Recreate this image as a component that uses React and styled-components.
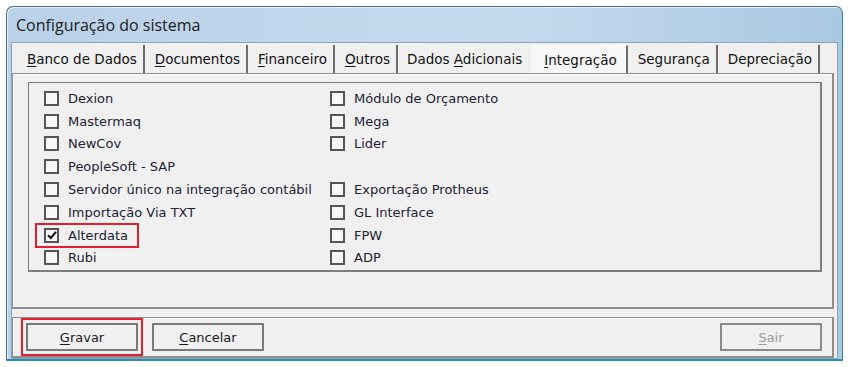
import React from "react";
import styled, { createGlobalStyle } from "styled-components";

const GlobalStyle = createGlobalStyle`
  html, body {
    overflow: hidden;
  }
  body {
    margin: 0;
    background: #ffffff;
    font-family: "DejaVu Sans", "Liberation Sans", sans-serif;
  }
`;

const tabs = [
  { label: "Banco de Dados", key: 0 },
  { label: "Documentos", key: 0 },
  { label: "Financeiro", key: 0 },
  { label: "Outros", key: 0 },
  { label: "Dados Adicionais", key: 6, beforeActive: true },
  { label: "Integração", key: 0, active: true },
  { label: "Segurança", key: -1 },
  { label: "Depreciação", key: -1 },
];

const leftColumn = [
  { label: "Dexion" },
  { label: "Mastermaq" },
  { label: "NewCov" },
  { label: "PeopleSoft - SAP" },
  { label: "Servidor único na integração contábil" },
  { label: "Importação Via TXT" },
  { label: "Alterdata", checked: true, marked: true },
  { label: "Rubi" },
];

const rightColumn = [
  { label: "Módulo de Orçamento" },
  { label: "Mega" },
  { label: "Lider" },
  null,
  { label: "Exportação Protheus" },
  { label: "GL Interface" },
  { label: "FPW" },
  { label: "ADP" },
];

// underlines the access key letter, like a Windows mnemonic
function Mnemonic({ text, at = 0 }) {
  if (at < 0) return <span>{text}</span>;
  return (
    <span>
      {text.slice(0, at)}
      <u>{text[at]}</u>
      {text.slice(at + 1)}
    </span>
  );
}

function Option({ item }) {
  if (!item) return <Empty />;
  const row = (
    <OptionRow>
      <Box>
        {item.checked && (
          <svg width="10" height="10" viewBox="0 0 10 10">
            <path d="M1 5.2 L3.8 8 L9 1.8" fill="none" stroke="#111" strokeWidth="2" />
          </svg>
        )}
      </Box>
      <OptionLabel>{item.label}</OptionLabel>
    </OptionRow>
  );
  return item.marked ? <RedMark>{row}</RedMark> : row;
}

export default function App() {
  const rows = leftColumn.map((l, i) => [l, rightColumn[i]]);
  return (
    <>
      <GlobalStyle />
      <Window>
        <TitleBar>Configuração do sistema</TitleBar>
        <Client>
          <TabStrip>
            {tabs.map((t) => (
              <Tab key={t.label} $active={t.active} $beforeActive={t.beforeActive}>
                <Mnemonic text={t.label} at={t.key} />
              </Tab>
            ))}
          </TabStrip>
          <TabPage>
            <GroupBox>
              <CheckGrid>
                {rows.map(([l, r], i) => (
                  <React.Fragment key={i}>
                    <Cell><Option item={l} /></Cell>
                    <Cell><Option item={r} /></Cell>
                  </React.Fragment>
                ))}
              </CheckGrid>
            </GroupBox>
          </TabPage>
          <ButtonBar>
            <ButtonMark>
              <Button><Mnemonic text="Gravar" /></Button>
            </ButtonMark>
            <Button><Mnemonic text="Cancelar" /></Button>
            <Spacer />
            <Button disabled $narrow><Mnemonic text="Sair" /></Button>
          </ButtonBar>
        </Client>
      </Window>
    </>
  );
}

const Window = styled.div`
  margin: 6px 0 0 6px;
  width: 837px;
  box-sizing: border-box;
  border: 1px solid #55697d;
  border-right-color: #2f87a6;
  border-bottom: 2px solid #2a8fae;
  border-radius: 7px 7px 0 0;
  background: linear-gradient(to right, #b9d1e9, #c6daee 60%, #a9c8e3);
  box-shadow: inset 1px 1px 0 #e6f0fa;
  padding: 0 4px;
  display: flex;
  flex-direction: column;
`;

const TitleBar = styled.div`
  height: 35px;
  display: flex;
  align-items: center;
  padding-left: 5px;
  font-family: "Open Sans", "Noto Sans", sans-serif;
  font-size: 16px;
  color: #1c1c1c;
`;

const Client = styled.div`
  background: #f0f0f0;
  border: 1px solid #8ba3bc;
  display: flex;
  flex-direction: column;
  padding: 0 3px 0 0;
`;

const TabStrip = styled.div`
  display: flex;
  align-items: stretch;
  height: 30px;
  padding-left: 5px;
`;

const Tab = styled.div`
  display: flex;
  align-items: center;
  margin-top: 2px;
  font-size: 13.5px;
  color: #111;
  white-space: nowrap;
  padding: ${(p) => (p.$active ? "0 9px 0 13px" : p.$beforeActive ? "0 9px 0 9px" : "0 6px 0 10px")};
  border-right: ${(p) => (p.$beforeActive ? "none" : "2px solid #6d6d6d")};
  border-top: ${(p) => (p.$active ? "1px solid #fcfcfc" : "none")};
  background: ${(p) => (p.$active ? "#f7f7f7" : "transparent")};
  u {
    text-decoration-thickness: 1px;
    text-underline-offset: 2px;
  }
`;

const TabPage = styled.div`
  height: 236px;
  box-sizing: border-box;
  border: 1px solid #8e8e8e;
  border-width: 1px 2px 2px 1px;
  box-shadow: inset 1px 1px 0 #ffffff;
  padding: 8px 10px 0 15px;
`;

const GroupBox = styled.div`
  height: 190px;
  box-sizing: border-box;
  border: 1px solid #7d7d7d;
  border-right-width: 2px;
  border-bottom-width: 2px;
  padding: 4px 0 0 15px;
`;

const CheckGrid = styled.div`
  display: grid;
  grid-template-columns: 286px 1fr;
  grid-auto-rows: 22.8px;
`;

const Cell = styled.div`
  display: flex;
  align-items: center;
`;

const Empty = styled.span``;

const OptionRow = styled.div`
  display: flex;
  align-items: center;
  gap: 9px;
`;

const Box = styled.span`
  width: 11px;
  height: 11px;
  border: 2px solid #555;
  background: #f7f7f7;
  display: flex;
  align-items: center;
  justify-content: center;
`;

const OptionLabel = styled.span`
  font-size: 13px;
  color: #1d1d33;
  white-space: nowrap;
`;

const RedMark = styled.div`
  border: 2px solid #e3202b;
  margin-left: -9px;
  padding: 3px 9px 3px 7px;
  display: flex;
`;

const ButtonMark = styled.div`
  border: 2px solid #e3202b;
  margin: -5px -6px -5px -5px;
  padding: 3px;
  display: flex;
`;

const ButtonBar = styled.div`
  margin-top: 8px;
  height: 41px;
  box-sizing: border-box;
  border: 1px solid #8e8e8e;
  border-width: 1px 2px 2px 1px;
  box-shadow: inset 1px 1px 0 #ffffff;
  display: flex;
  align-items: center;
  gap: 15px;
  padding: 0 10px 0 13px;
`;

const Button = styled.button`
  width: ${(p) => (p.$narrow ? "102px" : "112px")};
  height: 28px;
  border: 2px solid #7a7a7a;
  background: #f0f0f0;
  font-family: "DejaVu Sans", sans-serif;
  font-size: 13px;
  color: #1a1a1a;
  padding: 0;
  &:disabled {
    color: #9a9a9a;
    border-color: #8a8a8a;
  }
  u {
    text-underline-offset: 2px;
  }
`;

const Spacer = styled.div`
  flex: 1;
`;
